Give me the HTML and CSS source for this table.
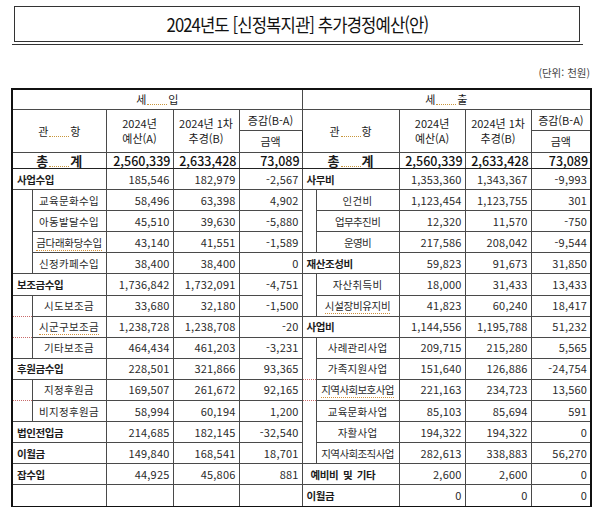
FILE: index.html
```html
<!DOCTYPE html>
<html lang="ko">
<head>
<meta charset="utf-8">
<title>2024년도 추가경정예산</title>
<link rel="stylesheet" href="styles.css">
</head>
<body>
<div class="page">
  <div class="title-box"><span class="title-text">2024년도 [신정복지관] 추가경정예산(안)</span></div>
  <div class="title-rule"></div>
  <div class="unit">(단위: 천원)</div>
  <table class="budget">
    <colgroup>
      <col class="c-ind-l"><col class="c-lab-l"><col class="c-a-l"><col class="c-b-l"><col class="c-c-l">
      <col class="c-ind-r"><col class="c-lab-r"><col class="c-a-r"><col class="c-b-r"><col class="c-c-r">
    </colgroup>
    <tr class="r-sec">
      <td colspan="5" class="sec"><span class="dw">세</span><span class="dots"></span><span class="dw">입</span></td>
      <td colspan="5" class="sec mid"><span class="dw">세</span><span class="dots"></span><span class="dw">출</span></td>
    </tr>
    <tr class="r-h1">
      <td colspan="2" rowspan="2" class="hd"><span class="dw">관</span><span class="dots"></span><span class="dw">항</span></td>
      <td rowspan="2" class="hd">2024년<br>예산(A)</td>
      <td rowspan="2" class="hd">2024년 1차<br>추경(B)</td>
      <td class="hd">증감(B-A)</td>
      <td colspan="2" rowspan="2" class="hd mid"><span class="dw">관</span><span class="dots"></span><span class="dw">항</span></td>
      <td rowspan="2" class="hd">2024년<br>예산(A)</td>
      <td rowspan="2" class="hd">2024년 1차<br>추경(B)</td>
      <td class="hd">증감(B-A)</td>
    </tr>
    <tr class="r-h2">
      <td class="hd">금액</td>
      <td class="hd">금액</td>
    </tr>
    <tr class="r-tot">
      <td colspan="2" class="tot-l"><span class="dw">총</span><span class="dots"></span><span class="dw">계</span></td>
      <td class="tot">2,560,339</td><td class="tot">2,633,428</td><td class="tot">73,089</td>
      <td colspan="2" class="tot-l mid"><span class="dw">총</span><span class="dots"></span><span class="dw">계</span></td>
      <td class="tot">2,560,339</td><td class="tot">2,633,428</td><td class="tot">73,089</td>
    </tr>
    <tr class="r">
      <td colspan="2" class="grp">사업수입</td>
      <td class="n">185,546</td><td class="n">182,979</td><td class="n">-2,567</td>
      <td colspan="2" class="grp mid">사무비</td>
      <td class="n">1,353,360</td><td class="n">1,343,367</td><td class="n">-9,993</td>
    </tr>
    <tr class="r">
      <td class="ind"></td><td class="sub">교육문화수입</td>
      <td class="n">58,496</td><td class="n">63,398</td><td class="n">4,902</td>
      <td class="ind mid"></td><td class="sub">인건비</td>
      <td class="n">1,123,454</td><td class="n">1,123,755</td><td class="n">301</td>
    </tr>
    <tr class="r">
      <td class="ind"></td><td class="sub">아동발달수입</td>
      <td class="n">45,510</td><td class="n">39,630</td><td class="n">-5,880</td>
      <td class="ind mid"></td><td class="sub narrow">업무추진비</td>
      <td class="n">12,320</td><td class="n">11,570</td><td class="n">-750</td>
    </tr>
    <tr class="r">
      <td class="ind"></td><td class="sub tight"><span class="ul">금다래화당수입</span></td>
      <td class="n">43,140</td><td class="n">41,551</td><td class="n">-1,589</td>
      <td class="ind mid"></td><td class="sub narrow">운영비</td>
      <td class="n">217,586</td><td class="n">208,042</td><td class="n">-9,544</td>
    </tr>
    <tr class="r">
      <td class="ind"></td><td class="sub">신정카페수입</td>
      <td class="n">38,400</td><td class="n">38,400</td><td class="n">0</td>
      <td colspan="2" class="grp mid">재산조성비</td>
      <td class="n">59,823</td><td class="n">91,673</td><td class="n">31,850</td>
    </tr>
    <tr class="r">
      <td colspan="2" class="grp">보조금수입</td>
      <td class="n">1,736,842</td><td class="n">1,732,091</td><td class="n">-4,751</td>
      <td class="ind mid"></td><td class="sub">자산취득비</td>
      <td class="n">18,000</td><td class="n">31,433</td><td class="n">13,433</td>
    </tr>
    <tr class="r">
      <td class="ind"></td><td class="sub">시도보조금</td>
      <td class="n">33,680</td><td class="n">32,180</td><td class="n">-1,500</td>
      <td class="ind mid"></td><td class="sub tight"><span class="ul">시설장비유지비</span></td>
      <td class="n">41,823</td><td class="n">60,240</td><td class="n">18,417</td>
    </tr>
    <tr class="r">
      <td class="ind dot-top"></td><td class="sub"><span class="ul">시군구보조금</span></td>
      <td class="n">1,238,728</td><td class="n">1,238,708</td><td class="n">-20</td>
      <td colspan="2" class="grp mid">사업비</td>
      <td class="n">1,144,556</td><td class="n">1,195,788</td><td class="n">51,232</td>
    </tr>
    <tr class="r">
      <td class="ind dot-top"></td><td class="sub">기타보조금</td>
      <td class="n">464,434</td><td class="n">461,203</td><td class="n">-3,231</td>
      <td class="ind mid"></td><td class="sub">사례관리사업</td>
      <td class="n">209,715</td><td class="n">215,280</td><td class="n">5,565</td>
    </tr>
    <tr class="r">
      <td colspan="2" class="grp">후원금수입</td>
      <td class="n">228,501</td><td class="n">321,866</td><td class="n">93,365</td>
      <td class="ind mid"></td><td class="sub">가족지원사업</td>
      <td class="n">151,640</td><td class="n">126,886</td><td class="n">-24,754</td>
    </tr>
    <tr class="r">
      <td class="ind"></td><td class="sub">지정후원금</td>
      <td class="n">169,507</td><td class="n">261,672</td><td class="n">92,165</td>
      <td class="ind mid dot-top"></td><td class="sub tighter"><span class="ul">지역사회보호사업</span></td>
      <td class="n">221,163</td><td class="n">234,723</td><td class="n">13,560</td>
    </tr>
    <tr class="r">
      <td class="ind dot-top"></td><td class="sub">비지정후원금</td>
      <td class="n">58,994</td><td class="n">60,194</td><td class="n">1,200</td>
      <td class="ind mid dot-top"></td><td class="sub">교육문화사업</td>
      <td class="n">85,103</td><td class="n">85,694</td><td class="n">591</td>
    </tr>
    <tr class="r">
      <td colspan="2" class="grp">법인전입금</td>
      <td class="n">214,685</td><td class="n">182,145</td><td class="n">-32,540</td>
      <td class="ind mid"></td><td class="sub">자활사업</td>
      <td class="n">194,322</td><td class="n">194,322</td><td class="n">0</td>
    </tr>
    <tr class="r">
      <td colspan="2" class="grp">이월금</td>
      <td class="n">149,840</td><td class="n">168,541</td><td class="n">18,701</td>
      <td class="ind mid"></td><td class="sub tighter">지역사회조직사업</td>
      <td class="n">282,613</td><td class="n">338,883</td><td class="n">56,270</td>
    </tr>
    <tr class="r">
      <td colspan="2" class="grp">잡수입</td>
      <td class="n">44,925</td><td class="n">45,806</td><td class="n">881</td>
      <td colspan="2" class="grp mid indent">예비비 및 기타</td>
      <td class="n">2,600</td><td class="n">2,600</td><td class="n">0</td>
    </tr>
    <tr class="r">
      <td colspan="2" class="empty"></td>
      <td class="empty dl"></td><td class="empty dl"></td><td class="empty dl"></td>
      <td colspan="2" class="grp mid">이월금</td>
      <td class="n">0</td><td class="n">0</td><td class="n">0</td>
    </tr>
  </table>
</div>
</body>
</html>
```

FILE: styles.css
```css
html, body {
  margin: 0;
  padding: 0;
  background: #fff;
}
body {
  font-family: "Noto Sans CJK KR", "Noto Sans", sans-serif;
  color: #1c1c1c;
}
.page {
  width: 600px;
  height: 507px;
  overflow: hidden;
  padding-top: 6px;
  box-sizing: border-box;
}
.title-box {
  margin: 0 20px 0 14px;
  height: 34px;
  border: 1px solid #333;
  display: flex;
  align-items: center;
  justify-content: center;
  color: #111;
}
.title-text {
  display: inline-block;
  font-size: 18.5px;
  letter-spacing: -1px;
  transform: scaleX(0.9);
}
.title-rule {
  margin: 2px 17px 0 12px;
  border-top: 1.5px solid #333;
}
.unit {
  margin-top: 21px;
  padding-right: 10px;
  text-align: right;
  font-size: 10.5px;
  color: #444;
  line-height: 14px;
}
.budget {
  margin: 8px 0 0 11px;
  border-collapse: collapse;
  table-layout: fixed;
  width: 579px;
  border: 2px solid #111;
}
.c-ind-l { width: 20px; }
.c-lab-l { width: 74px; }
.c-a-l { width: 67px; }
.c-b-l { width: 66px; }
.c-c-l { width: 63px; }
.c-ind-r { width: 14px; }
.c-lab-r { width: 83px; }
.c-a-r { width: 66px; }
.c-b-r { width: 66px; }
.c-c-r { width: 60px; }

.budget td {
  border: 1px solid #4a4a4a;
  padding: 0 3px;
  font-size: 11px;
  line-height: 13px;
  white-space: nowrap;
  overflow: hidden;
}
.budget td.mid {
  border-left: 1px solid #222;
}
.r-sec td { height: 19px; }
.r-h1 td { height: 20px; }
.r-h2 td { height: 21px; }
.budget .r-tot td {
  height: 15px;
  line-height: 15px;
  overflow: visible;
  border-bottom: 1px solid #222;
}
.r td { height: 20.1px; }

.sec, .hd, .tot-l {
  text-align: center;
  color: #1a1a1a;
}
.budget td.hd {
  font-size: 11px;
  line-height: 15px;
}
.dw {
  display: inline-block;
}
.dots {
  display: inline-block;
  width: 20px;
  height: 1px;
  margin: 0 1px;
  border-bottom: 1px dotted #c8963c;
  vertical-align: -1px;
}
.budget td.tot-l {
  font-weight: 700;
  font-size: 13px;
}
.budget td.tot {
  text-align: right;
  font-size: 12.5px;
  font-weight: 500;
  letter-spacing: 0;
  color: #111;
  padding-right: 2px;
}
.n {
  text-align: right;
  letter-spacing: 0.2px;
  color: #2a2a2a;
}
.budget td.grp {
  text-align: left;
  font-weight: 700;
  font-size: 10.5px;
  letter-spacing: -0.4px;
  padding-left: 4px;
}
.budget td.grp.indent {
  padding-left: 8px;
  word-spacing: 2px;
}
.budget td.sub {
  text-align: center;
  font-size: 10.5px;
  letter-spacing: 0.3px;
  color: #2a2a2a;
  padding: 0 1px;
}
.budget td.sub.narrow {
  letter-spacing: -0.6px;
}
.budget td.sub.tight {
  letter-spacing: -0.3px;
}
.budget td.sub.tighter {
  letter-spacing: -0.6px;
}
.ul {
  border-bottom: 1px dotted #d0903a;
}
.budget td.ind {
  border-top: none;
  border-bottom: none;
}
.budget td.ind.dot-top {
  border-top: 1px dotted #c86a6a;
}
.budget td.empty.dl {
  border-left: 1px dotted #d07070;
}
```
